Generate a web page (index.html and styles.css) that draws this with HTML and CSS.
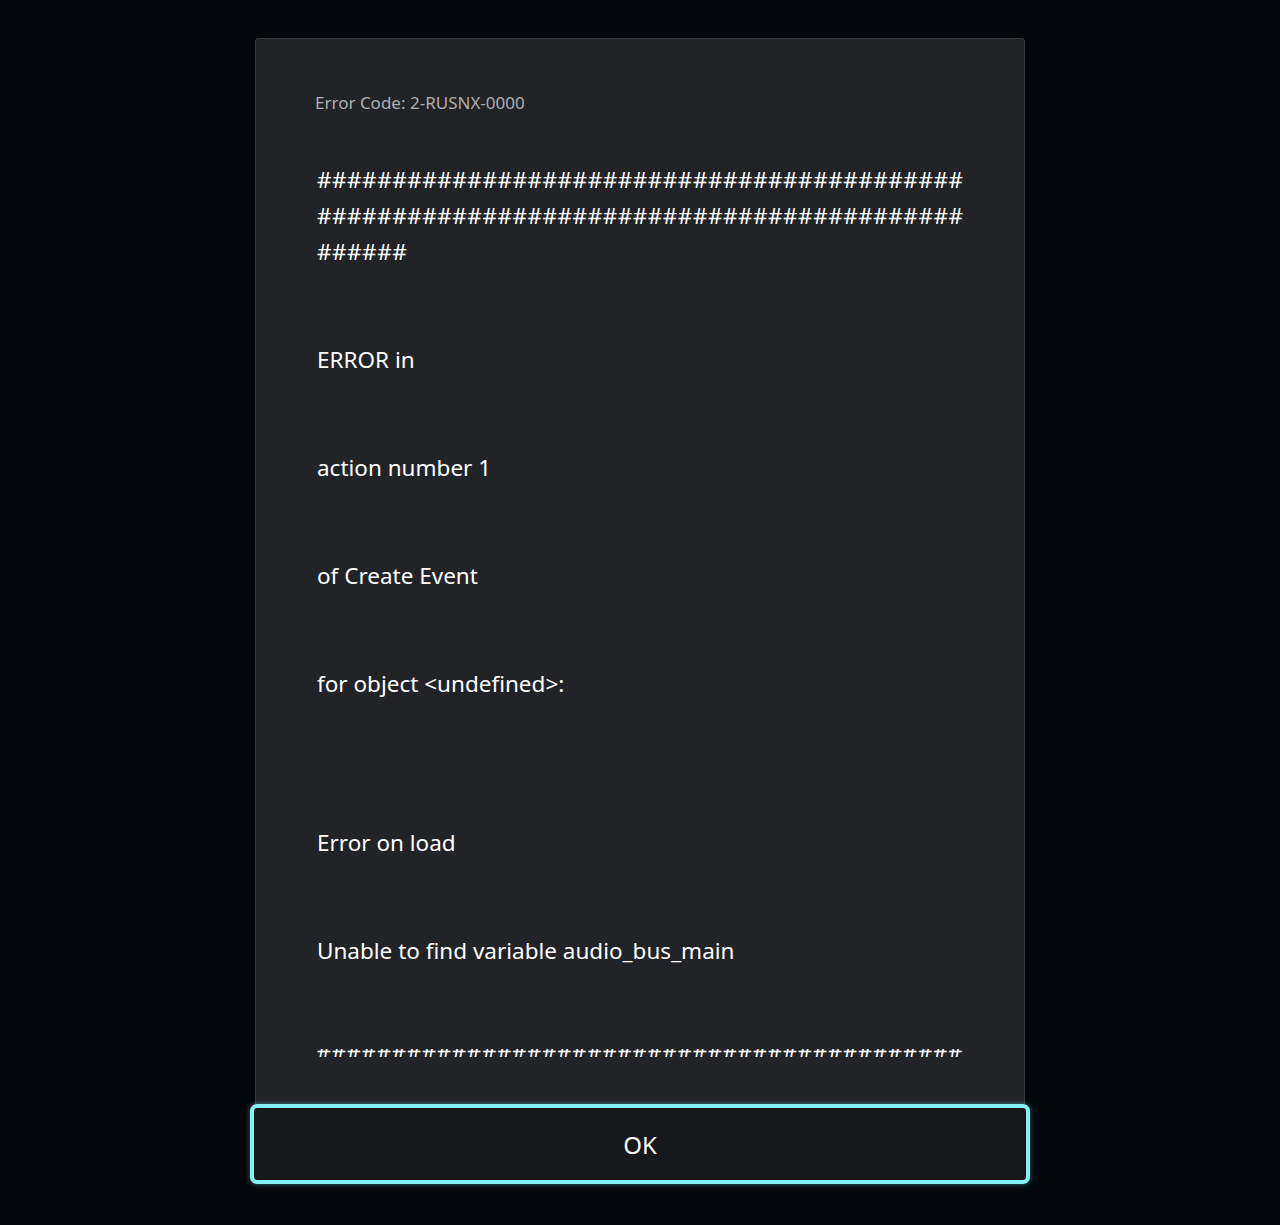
FILE: index.html
```html
<!DOCTYPE html>
<html lang="en">
<head>
<meta charset="utf-8">
<title>Error</title>
<link rel="stylesheet" href="styles.css">
</head>
<body>
<div class="dialog">
  <div class="panel">
    <div class="code">Error Code: 2-RUSNX-0000</div>
    <div class="message">
      <p class="hashes">###########################################<br>###########################################<br>######</p>
      <p class="line gap">ERROR in</p>
      <p class="line gap">action number 1</p>
      <p class="line gap">of Create Event</p>
      <p class="line gap">for object &lt;undefined&gt;:</p>
      <p class="line gap-wide">Error on load</p>
      <p class="line gap">Unable to find variable audio_bus_main</p>
      <p class="line tail"><span class="cut">###########################################</span></p>
    </div>
  </div>
  <button class="ok" type="button">OK</button>
</div>
</body>
</html>
```

FILE: styles.css
```css
html, body {
  margin: 0;
  padding: 0;
  background: #03070b;
}

body {
  height: 1225px;
  overflow: hidden;
  font-family: "Noto Sans", "DejaVu Sans", sans-serif;
}

.dialog {
  width: 780px;
  margin: 38px auto 0;
  display: flex;
  flex-direction: column;
}

.panel {
  margin: 0 5px;
  height: 1066px;
  box-sizing: border-box;
  background: #222326;
  border: 1px solid #3a3b3e;
  border-bottom: none;
  border-radius: 4px 4px 0 0;
  padding: 52px 60px 0 59px;
  overflow: hidden;
  display: flex;
  flex-direction: column;
}

.code {
  font-size: 17px;
  line-height: 24px;
  color: #aeaeae;
}

.message {
  padding: 47px 0 0 2px;
  color: #ffffff;
  font-size: 22.5px;
  line-height: 36px;
}

.message p {
  margin: 0;
}

.hashes {
  letter-spacing: 0.5px;
  word-break: break-all;
}

.gap {
  margin-top: 72px !important;
}

.gap-wide {
  margin-top: 123px !important;
}

.tail {
  margin-top: 62px !important;
  white-space: nowrap;
  overflow: hidden;
  letter-spacing: 0.5px;
}

.cut {
  display: inline-block;
  clip-path: inset(50% 0 0 0);
}

.ok {
  height: 80px;
  box-sizing: border-box;
  background: #17181b;
  border: 4px solid #86f1f3;
  border-radius: 7px;
  box-shadow: 0 0 5px rgba(120, 240, 245, 0.45);
  color: #ffffff;
  font-family: inherit;
  font-size: 24px;
  padding: 0;
  cursor: pointer;
}
```
